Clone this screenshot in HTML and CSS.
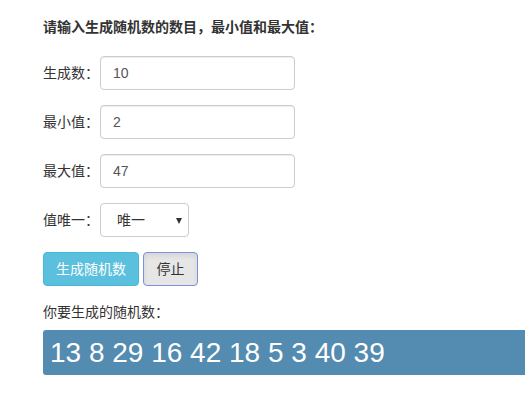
FILE: index.html
```html
<!DOCTYPE html>
<html lang="zh-CN">
<head>
    <meta charset="UTF-8">
    <title>随机数生成</title>
    <link rel="stylesheet" href="styles.css">
</head>
<body>
    <div class="container">
        <h4 class="title">请输入生成随机数的数目，最小值和最大值：</h4>
        <div class="form-row">
            <label for="count">生成数：</label>
            <input type="text" id="count" class="form-control" value="10">
        </div>
        <div class="form-row">
            <label for="min">最小值：</label>
            <input type="text" id="min" class="form-control" value="2">
        </div>
        <div class="form-row">
            <label for="max">最大值：</label>
            <input type="text" id="max" class="form-control" value="47">
        </div>
        <div class="form-row">
            <label for="unique">值唯一：</label>
            <div class="select-wrap">
                <select id="unique" class="form-select">
                    <option>唯一</option>
                    <option>不唯一</option>
                </select>
            </div>
        </div>
        <div class="btn-row">
            <button class="btn btn-info">生成随机数</button>
            <button class="btn btn-default active">停止</button>
        </div>
        <p class="result-label">你要生成的随机数：</p>
        <div class="result">13 8 29 16 42 18 5 3 40 39</div>
    </div>
</body>
</html>
```

FILE: styles.css
```css
body {
    margin: 0;
    font-family: "Liberation Sans", Arial, "Noto Sans CJK SC", sans-serif;
    font-size: 14px;
    line-height: 20px;
    color: #333;
    background: #fff;
}
.container {
    padding: 17px 0 0 43px;
}
.title {
    margin: 0 0 19px;
    font-size: 14px;
    font-weight: bold;
    line-height: 20px;
}
.form-row {
    display: flex;
    align-items: center;
    margin-bottom: 15px;
}
.form-row label {
    width: 57px;
    flex: none;
}
.form-control {
    box-sizing: border-box;
    width: 195px;
    height: 34px;
    padding: 6px 12px;
    font: inherit;
    color: #555;
    border: 1px solid #ccc;
    border-radius: 4px;
    box-shadow: inset 0 1px 1px rgba(0, 0, 0, .075);
    outline: none;
}
.select-wrap {
    position: relative;
}
.select-wrap::after {
    content: "";
    position: absolute;
    right: 7px;
    top: 15px;
    border-left: 3px solid transparent;
    border-right: 3px solid transparent;
    border-top: 6px solid #333;
    pointer-events: none;
}
.form-select {
    box-sizing: border-box;
    width: 89px;
    height: 34px;
    padding: 0 0 0 16px;
    font: inherit;
    color: #333;
    background: #fff;
    border: 1px solid #ccc;
    border-radius: 4px;
    appearance: none;
    -webkit-appearance: none;
    outline: none;
}
.btn-row {
    display: flex;
    gap: 4px;
    margin-top: 1px;
}
.btn {
    box-sizing: border-box;
    height: 34px;
    padding: 6px 12px;
    font: inherit;
    border: 1px solid transparent;
    border-radius: 4px;
    cursor: pointer;
}
.btn-info {
    width: 96px;
    color: #fff;
    background-color: #5bc0de;
    border-color: #46b8da;
}
.btn-default {
    width: 55px;
    color: #333;
    background-color: #e6e6e6;
    border-color: #7b93d6;
    box-shadow: inset 0 3px 5px rgba(0, 0, 0, .08);
}
.result-label {
    margin: 16px 0 8px;
}
.result {
    height: 45px;
    box-sizing: border-box;
    padding: 0 0 0 7px;
    font-size: 28px;
    line-height: 45px;
    color: #fff;
    background-color: #548bb0;
    border-radius: 3px 0 0 3px;
}
```
